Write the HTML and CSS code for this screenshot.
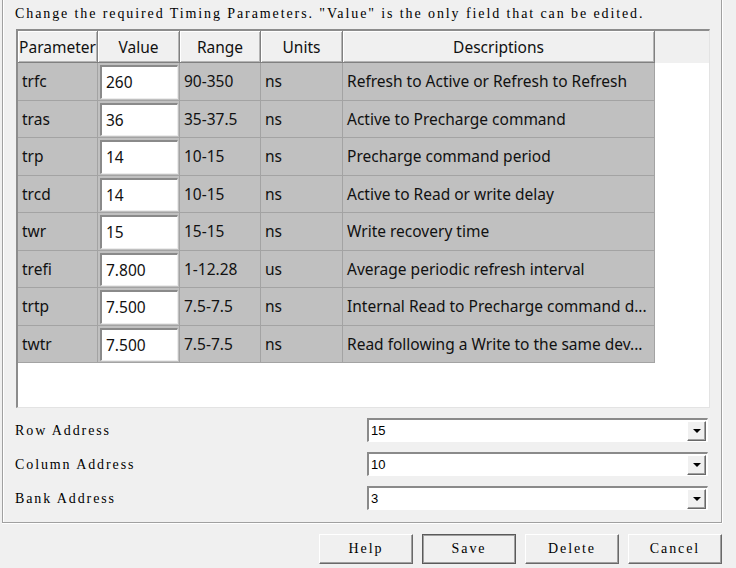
FILE: index.html
```html
<!DOCTYPE html>
<html lang="en">
<head>
  <meta charset="UTF-8" />
  <title>Timing Parameters</title>
  <link rel="stylesheet" href="styles.css">
</head>
<body>
  <div class="group">
    <p class="hint">Change the required Timing Parameters. "Value" is the only field that can be edited.</p>

    <div class="grid-frame">
      <div class="head">
        <span>Parameter</span>
        <span>Value</span>
        <span>Range</span>
        <span>Units</span>
        <span>Descriptions</span>
        <span class="filler"></span>
      </div>

      <div class="row">
        <span>trfc</span>
        <span class="val"><span class="edit">260</span></span>
        <span>90-350</span>
        <span>ns</span>
        <span>Refresh to Active or Refresh to Refresh</span>
      </div>
      <div class="row">
        <span>tras</span>
        <span class="val"><span class="edit">36</span></span>
        <span>35-37.5</span>
        <span>ns</span>
        <span>Active to Precharge command</span>
      </div>
      <div class="row">
        <span>trp</span>
        <span class="val"><span class="edit">14</span></span>
        <span>10-15</span>
        <span>ns</span>
        <span>Precharge command period</span>
      </div>
      <div class="row">
        <span>trcd</span>
        <span class="val"><span class="edit">14</span></span>
        <span>10-15</span>
        <span>ns</span>
        <span>Active to Read or write delay</span>
      </div>
      <div class="row">
        <span>twr</span>
        <span class="val"><span class="edit">15</span></span>
        <span>15-15</span>
        <span>ns</span>
        <span>Write recovery time</span>
      </div>
      <div class="row">
        <span>trefi</span>
        <span class="val"><span class="edit">7.800</span></span>
        <span>1-12.28</span>
        <span>us</span>
        <span>Average periodic refresh interval</span>
      </div>
      <div class="row">
        <span>trtp</span>
        <span class="val"><span class="edit">7.500</span></span>
        <span>7.5-7.5</span>
        <span>ns</span>
        <span>Internal Read to Precharge command d...</span>
      </div>
      <div class="row">
        <span>twtr</span>
        <span class="val"><span class="edit">7.500</span></span>
        <span>7.5-7.5</span>
        <span>ns</span>
        <span>Read following a Write to the same dev...</span>
      </div>
    </div>

    <div class="fields">
      <label>Row Address</label>
      <div class="combo"><span class="current">15</span><span class="drop"></span></div>
      <label>Column Address</label>
      <div class="combo"><span class="current">10</span><span class="drop"></span></div>
      <label>Bank Address</label>
      <div class="combo"><span class="current">3</span><span class="drop"></span></div>
    </div>
  </div>

  <div class="actions">
    <button>Help</button>
    <button class="default">Save</button>
    <button>Delete</button>
    <button>Cancel</button>
  </div>
</body>
</html>
```

FILE: styles.css
```css
* {
  box-sizing: border-box;
}

body {
  margin: 0;
  background: #f0f0f0;
  font-family: "Liberation Serif", serif;
  font-size: 14px;
  letter-spacing: 1.9px;
  color: #000;
}

.group {
  margin: 0 14px 0 2px;
  padding: 4px 12px 12px 12px;
  border: 1px solid #a0a0a0;
  border-top: 0;
  box-shadow: inset 1px 0 #fff, 1px 0 #fff, 0 1px #fff;
}

.hint {
  margin: 0 0 6px;
  line-height: 19px;
  white-space: nowrap;
}

/* parameter grid */
.grid-frame {
  margin-left: 1px;
  width: 694px;
  height: 379px;
  border-style: solid;
  border-width: 2px 1px 1px 2px;
  border-color: #8c8c8c #e3e3e3 #e3e3e3 #8c8c8c;
  background: #fff;
  font-family: "Noto Sans", sans-serif;
  font-size: 15.5px;
  letter-spacing: 0;
  color: #111;
  overflow: hidden;
}

.head {
  display: grid;
  grid-template-columns: 80px 82px 81px 82px 312px 1fr;
  height: 32px;
  background: #f0f0f0;
}

.head span {
  display: flex;
  align-items: center;
  justify-content: center;
  border-right: 1px solid #808080;
  border-bottom: 1px solid #808080;
  box-shadow: inset 1px 1px #fff, inset -1px -1px #b4b4b4;
  white-space: nowrap;
}

.head .filler {
  border: 0;
  box-shadow: none;
}

.row {
  display: grid;
  grid-template-columns: 80px 82px 81px 82px 312px;
  width: 637px;
  height: 37.5px;
}

.row > span {
  display: flex;
  align-items: center;
  padding-left: 4px;
  background: #c0c0c0;
  border-right: 1px solid #a3a3a3;
  border-bottom: 1px solid #a3a3a3;
  white-space: nowrap;
  overflow: hidden;
}

.row > .val {
  padding: 2px 1px 1px 2px;
}

.edit {
  flex: 1;
  align-self: stretch;
  display: flex;
  align-items: center;
  padding-left: 4px;
  background: #fff;
  border-style: solid;
  border-width: 2px 1px 1px 2px;
  border-color: #8a8a8a #ececec #ececec #8a8a8a;
}

/* address selectors */
.fields {
  margin-top: 10px;
  display: grid;
  grid-template-columns: 352px 341px;
  grid-auto-rows: 24px;
  row-gap: 10px;
  align-items: center;
}

.fields label {
  padding-top: 1px;
}

.combo {
  height: 24px;
  display: flex;
  align-items: center;
  padding-left: 2px;
  background: #fff;
  border-style: solid;
  border-width: 2px 1px 1px 2px;
  border-color: #8a8a8a #fff #fff #8a8a8a;
  font-family: "Liberation Sans", sans-serif;
  font-size: 13px;
  letter-spacing: 0;
}

.combo .current {
  flex: 1;
}

.drop {
  width: 19px;
  height: 20px;
  margin-right: 1px;
  display: flex;
  align-items: center;
  justify-content: center;
  background: #f0f0f0;
  border: 1px solid;
  border-color: #fff #696969 #696969 #fff;
  box-shadow: inset -1px -1px #a0a0a0;
}

.drop::after {
  content: "";
  border-left: 4px solid transparent;
  border-right: 4px solid transparent;
  border-top: 4px solid #000;
}

/* dialog buttons */
.actions {
  display: flex;
  justify-content: flex-end;
  gap: 9px;
  padding: 11px 14px 0 0;
}

button {
  width: 94px;
  height: 30px;
  padding: 0;
  font: inherit;
  letter-spacing: inherit;
  color: #000;
  background: #f0f0f0;
  border: 1px solid;
  border-color: #fff #696969 #696969 #fff;
  box-shadow: inset -1px -1px #a0a0a0;
}

button.default {
  border-color: #5a5a5a;
  box-shadow: inset 1px 1px #a0a0a0, inset -1px -1px #a0a0a0;
}
```
